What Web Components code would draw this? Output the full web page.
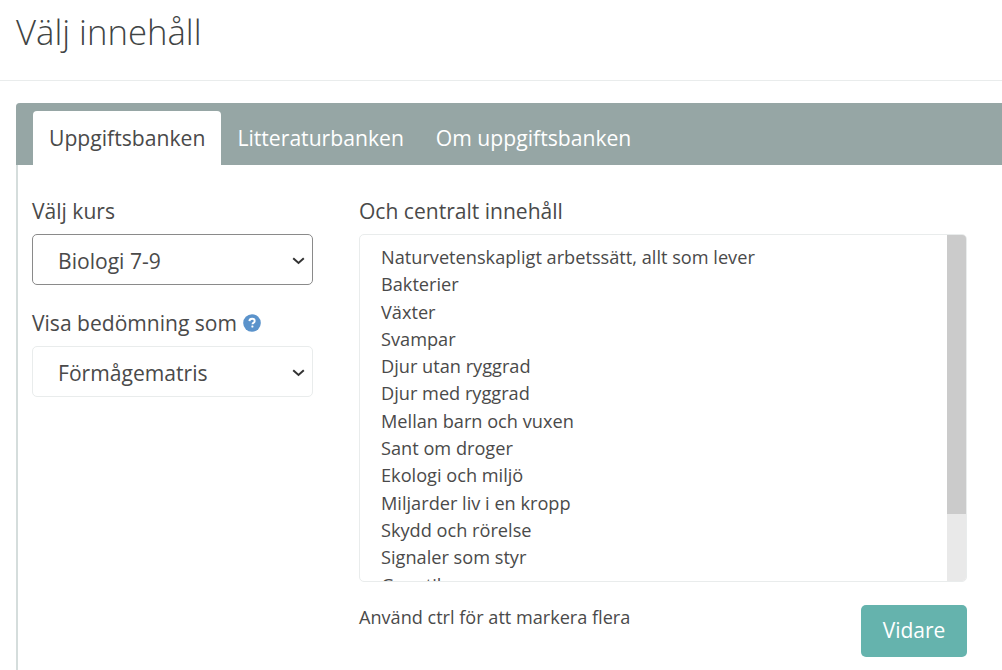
<!DOCTYPE html>
<html lang="sv"><head><meta charset="utf-8"><title>Välj innehåll</title>
<style>
html,body{margin:0;padding:0;background:#fff;overflow:hidden;height:670px}
body{font-family:"Open Sans",sans-serif;color:#4a4a4a}
</style></head><body>
<page-title>Välj innehåll</page-title>
<tab-panel>
  <tab-item slot="tabs" active>Uppgiftsbanken</tab-item>
  <tab-item slot="tabs">Litteraturbanken</tab-item>
  <tab-item slot="tabs">Om uppgiftsbanken</tab-item>
  <side-col slot="left">
    <field-label>Välj kurs</field-label>
    <select-box focused>Biologi 7-9</select-box>
    <field-label second><span>Visa bedömning som</span><help-icon></help-icon></field-label>
    <select-box>Förmågematris</select-box>
  </side-col>
  <main-col slot="right">
    <field-label>Och centralt innehåll</field-label>
    <list-box>
      <list-row>Naturvetenskapligt arbetssätt, allt som lever</list-row>
      <list-row>Bakterier</list-row>
      <list-row>Växter</list-row>
      <list-row>Svampar</list-row>
      <list-row>Djur utan ryggrad</list-row>
      <list-row>Djur med ryggrad</list-row>
      <list-row>Mellan barn och vuxen</list-row>
      <list-row>Sant om droger</list-row>
      <list-row>Ekologi och miljö</list-row>
      <list-row>Miljarder liv i en kropp</list-row>
      <list-row>Skydd och rörelse</list-row>
      <list-row>Signaler som styr</list-row>
      <list-row>Genetik</list-row>
    </list-box>
    <form-foot>
      <span>Använd ctrl för att markera flera</span>
      <action-button>Vidare</action-button>
    </form-foot>
  </main-col>
</tab-panel>
<script>
function def(name, css, html){
  customElements.define(name, class extends HTMLElement{
    constructor(){super();this.attachShadow({mode:'open'}).innerHTML='<style>'+css+'</style>'+(html||'<slot></slot>');}
  });
}
def('page-title',`:host{display:block;height:80px;border-bottom:1px solid #e9ecec;padding-left:16px;font-size:34.7px;font-weight:300;line-height:63px;color:#3f4444}`);
def('tab-panel',`:host{display:block;margin:22px 0 0 16px;border-left:2px solid #d5dddc;height:568px;border-radius:4px 0 0 0}
.bar{display:flex;align-items:flex-end;height:62px;background:#96a6a5;margin-left:-2px;padding-left:17px;border-radius:4px 0 0 0}
.body{display:flex;padding-top:34px;padding-left:14px}`,
`<div class="bar"><slot name="tabs"></slot></div><div class="body"><slot name="left"></slot><slot name="right"></slot></div>`);
def('tab-item',`:host{display:block;height:54px;box-sizing:border-box;padding:0 16px;font-size:21.15px;line-height:54px;color:#fff}
:host([active]){background:#fff;color:#4a4a4a;border-radius:4px 4px 0 0}`);
def('side-col',`:host{display:block;width:281px;margin-right:46px}`);
def('main-col',`:host{display:block;width:608px}`);
def('field-label',`:host{display:flex;align-items:center;gap:6px;font-size:21.05px;line-height:24px;height:24px;margin-bottom:11px;color:#4a4a4a;white-space:pre}
:host([second]){margin-top:26px;margin-bottom:11px}`);
def('help-icon',`:host{display:inline-flex;width:18px;height:18px}svg{display:block}`,
`<svg width="18" height="18" viewBox="0 0 18 18"><circle cx="9" cy="9" r="8.8" fill="#5b93cb"/><path d="M6.4 7.1C6.5 5.6 7.6 4.7 9.1 4.7c1.5 0 2.6.9 2.6 2.2 0 1-.6 1.5-1.3 2-.6.4-.9.7-.9 1.4" fill="none" stroke="#fff" stroke-width="1.9"/><rect x="8.4" y="11.5" width="2" height="2" rx=".4" fill="#fff"/></svg>`);
def('select-box',`:host{display:flex;align-items:center;justify-content:space-between;box-sizing:border-box;width:281px;height:51px;padding:2px 7px 0 25px;border:1px solid #e9ecec;border-radius:5px;font-size:21.1px;color:#4a4a4a;background:#fff}
:host([focused]){border-color:#8a8a8a}svg{display:block}`,
`<slot></slot><svg width="13" height="8" viewBox="0 0 13 8"><path d="M1.2 1.3 6.5 6l5.3-4.7" fill="none" stroke="#333" stroke-width="2"/></svg>`);
def('list-box',`:host{display:flex;box-sizing:border-box;width:608px;height:348px;border:1px solid #e9ecec;border-radius:5px;overflow:hidden;background:#fff}
.rows{flex:1;padding:9px 0 0 21px;overflow:hidden}
.track{width:19px;background:#e9e9e9}.thumb{height:279px;background:#cbcbcb}`,
`<div class="rows"><slot></slot></div><div class="track"><div class="thumb"></div></div>`);
def('list-row',`:host{display:block;height:27.3px;font-size:18.18px;line-height:27.3px;color:#4a4a4a;white-space:nowrap}`);
def('form-foot',`:host{display:flex;justify-content:space-between;align-items:flex-start;margin-top:23px;font-size:18.1px;line-height:24px;color:#4a4a4a}`);
def('action-button',`:host{display:block;box-sizing:border-box;width:106px;height:52px;background:#65b3ad;color:#fff;border-radius:5px;font-size:21px;font-weight:500;line-height:50px;text-align:center}`);
</script>
</body></html>
